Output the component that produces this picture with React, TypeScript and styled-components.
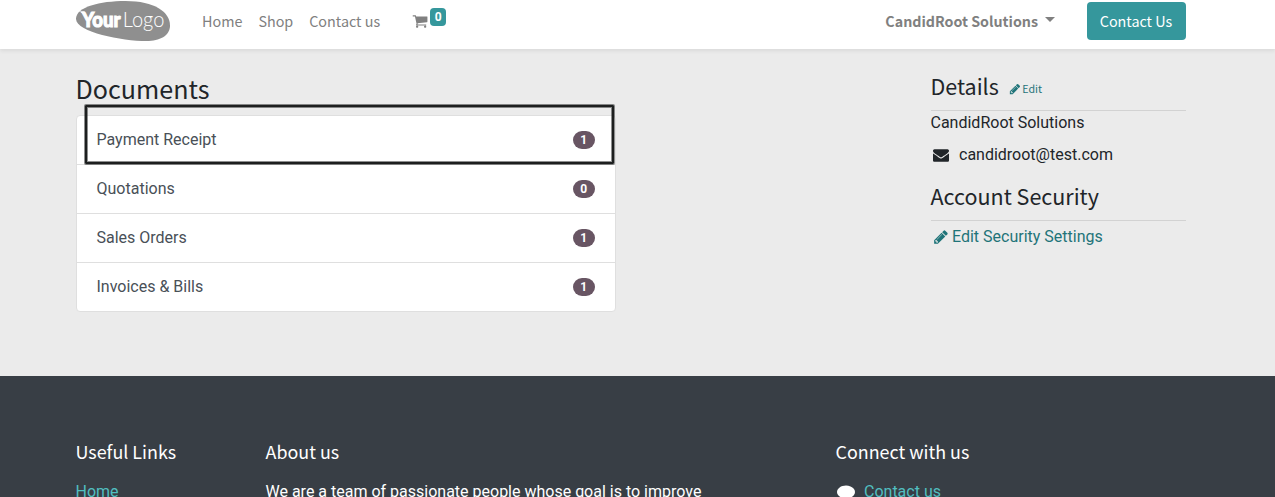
import React from "react";
import styled, { createGlobalStyle, css } from "styled-components";

const heading = css`
  font-family: "Noto Sans CJK SC", "Open Sans", sans-serif;
`;

const GlobalStyle = createGlobalStyle`
  *, *::before, *::after { box-sizing: border-box; }
  body {
    margin: 0;
    background: #ebebeb;
    color: #212529;
    font-family: Roboto, "Liberation Sans", sans-serif;
    font-size: 16px;
    line-height: 24px;
    overflow: hidden;
  }
`;

const Page = styled.div`
  display: flex;
  flex-direction: column;
  height: 497px;
  overflow: hidden;
`;

const Container = styled.div`
  display: flex;
  width: 1110px;
  margin-left: 75.5px;
`;

const Header = styled.header`
  flex: none;
  height: 49px;
  background: #fff;
  box-shadow: 0 2px 4px rgba(0, 0, 0, 0.075);
`;

const Navbar = styled(Container)`
  ${heading}
  align-items: center;
  height: 42px;
  color: #808080;
`;

const Logo = styled.svg`
  display: block;
  width: 95px;
  height: 42px;
  margin-right: 31.5px;
`;

const NavLink = styled.a`
  margin-right: 16px;
  font-size: 14.35px;
  line-height: 24px;
`;

const CartLink = styled.a`
  display: flex;
  align-items: center;
  margin-left: 16px;
  gap: 2px;
`;

const CartCount = styled.span`
  width: 16px;
  height: 18px;
  margin-top: -8px;
  border-radius: 4px;
  background: #35979c;
  color: #fff;
  font-family: Roboto, sans-serif;
  font-size: 12px;
  font-weight: 700;
  line-height: 18px;
  text-align: center;
`;

const UserMenu = styled.a`
  display: flex;
  align-items: center;
  gap: 7px;
  margin-left: auto;
  margin-right: 31.5px;
  font-size: 14.25px;
  font-weight: 700;
`;

const Caret = styled.span`
  margin-top: -3px;
  border: 5px solid transparent;
  border-top-color: #808080;
  border-bottom: 0;
`;

const ContactButton = styled.a`
  width: 99px;
  height: 38px;
  border-radius: 4px;
  background: #35979c;
  color: #fff;
  font-size: 14.35px;
  line-height: 38px;
  text-align: center;
`;

const Main = styled(Container)`
  flex: none;
  justify-content: space-between;
  height: 327px;
`;

const Documents = styled.section`
  width: 540px;
  padding-top: 22px;
`;

const Title = styled.h3`
  ${heading}
  margin: 0 0 10px;
  font-size: 25.1px;
  font-weight: 400;
  line-height: 34px;
`;

const List = styled.div`
  position: relative;
  border: 1px solid #dfdfdf;
  border-radius: 4px;
  background: #fff;
`;

const ListItem = styled.a`
  display: flex;
  align-items: center;
  justify-content: space-between;
  height: 49px;
  padding: 0 20px;
  color: #495057;

  & + & {
    border-top: 1px solid #dfdfdf;
  }
  &:first-child {
    height: 48px;
  }
`;

const Pill = styled.span`
  width: 22px;
  height: 18px;
  padding-left: 0.5px;
  border-radius: 10px;
  background: #685563;
  color: #fff;
  font-size: 12px;
  font-weight: 700;
  line-height: 18px;
  text-align: center;
`;

const Highlight = styled.div`
  position: absolute;
  top: -11px;
  left: 8.5px;
  width: 529px;
  height: 59px;
  border: 2px solid #1d1f1f;
  border-radius: 1px;
  box-shadow: 0 0 0 1px rgba(29, 31, 31, 0.5), inset 0 0 0 1px rgba(29, 31, 31, 0.5);
`;

const Sidebar = styled.aside`
  width: 255px;
  padding-top: 23px;
`;

const SideTitle = styled.h4`
  ${heading}
  display: flex;
  align-items: center;
  height: 39px;
  margin: 0;
  padding-bottom: 10px;
  border-bottom: 1px solid #d2d2d2;
  font-size: 21.5px;
  font-weight: 400;
  line-height: 30px;
`;

const EditLink = styled.a`
  display: flex;
  align-items: center;
  gap: 1.5px;
  margin: 6px 0 0 10px;
  color: #1f7479;
  font-size: 10.7px;
  line-height: 16px;
`;

const Person = styled.div`
  height: 24px;
`;

const Email = styled.div`
  display: flex;
  align-items: center;
  gap: 10.5px;
  height: 24px;
  margin: 8px 0 15px;
  padding-left: 2px;
`;

const SecurityLink = styled.a`
  display: flex;
  align-items: center;
  gap: 3px;
  margin-top: 4px;
  padding-left: 2.5px;
  color: #1f7479;
`;

const Footer = styled.footer`
  flex: 1;
  background: #383e45;
  color: #fff;
`;

const FooterColumn = styled.section<{ $width: number }>`
  width: ${(p) => p.$width}px;
  padding-top: 63px;
  white-space: nowrap;
`;

const FooterTitle = styled.h5`
  ${heading}
  margin: 0 0 17px;
  font-size: 17.9px;
  font-weight: 400;
  line-height: 24px;
`;

const FooterLink = styled.a`
  color: #51bfc0;
`;

const FooterRow = styled.div`
  display: flex;
  align-items: center;
  gap: 9.5px;
  padding-left: 1px;
`;

const Glyph = styled.svg<{ $size: number }>`
  flex: none;
  width: ${(p) => p.$size}px;
  height: ${(p) => p.$size}px;
  fill: currentColor;
`;

const paths = {
  cart: "M704 1536q0 52-38 90t-90 38-90-38-38-90 38-90 90-38 90 38 38 90zm896 0q0 52-38 90t-90 38-90-38-38-90 38-90 90-38 90 38 38 90zm128-1088v512q0 24-16.5 42.5t-40.5 21.5l-1044 122q13 60 13 70 0 16-24 64h920q26 0 45 19t19 45-19 45-45 19h-1024q-26 0-45-19t-19-45q0-11 8-31.5t16-36 21.5-40 15.5-29.5l-177-823h-204q-26 0-45-19t-19-45 19-45 45-19h256q16 0 28.5 6.5t19.5 15.5 13 24.5 8 26 5.5 29.5 4.5 26h1201q26 0 45 19t19 45z",
  pencil:
    "M491 1536l91-91-235-235-91 91v107h128v128h107zm523-928q0-22-22-22-10 0-17 7l-542 542q-7 7-7 17 0 22 22 22 10 0 17-7l542-542q7-7 7-17zm-54-192l416 416-832 832h-416v-416zm683 96q0 53-37 90l-166 166-416-416 166-165q36-38 90-38 53 0 91 38l235 234q37 39 37 91z",
  envelope:
    "M1792 710v794q0 66-47 113t-113 47h-1472q-66 0-113-47t-47-113v-794q44 49 101 87 362 246 497 345 57 42 92.5 65.5t94.5 48 110 24.5h2q51 0 110-24.5t94.5-48 92.5-65.5q170-123 498-345 57-39 100-87zm0-294q0 79-49 151t-122 123q-376 261-468 325-10 7-42.5 31t-54 38.5-52 32.5-57.5 27-50 9h-2q-23 0-50-9t-57.5-27-52-32.5-54-38.5-42.5-31q-91-64-262-182.5t-205-142.5q-62-42-117-115.5t-55-136.5q0-78 41.5-130t118.5-52h1472q65 0 112.5 47t47.5 113z",
  comment:
    "M1792 896q0 174-120 321.5t-326 233-450 85.5q-70 0-145-8-198 175-460 242-49 14-114 22-17 2-30.5-9t-17.5-29v-1q-3-4-.5-12t2-10 4.5-9.5l6-9 7-8.5 8-9q7-8 31-34.5t34.5-38 31-39.5 32.5-51 27-59 26-76q-157-89-247.5-220t-90.5-281q0-130 71-248.5t191-204.5 286-136.5 348-50.5q244 0 450 85.5t326 233 120 321.5z",
};

const Icon = ({ name, size }: { name: keyof typeof paths; size: number }) => (
  <Glyph $size={size} viewBox="0 0 1792 1792" aria-hidden="true">
    <path d={paths[name]} />
  </Glyph>
);

const documents = [
  { label: "Payment Receipt", count: 1 },
  { label: "Quotations", count: 0 },
  { label: "Sales Orders", count: 1 },
  { label: "Invoices & Bills", count: 1 },
];

export default function App() {
  return (
    <Page>
      <GlobalStyle />
      <Header>
        <Navbar as="nav">
          <Logo viewBox="0.5 0 95 42">
            <path
              d="M0.5 18.5C1 7 24 1 50 1C79 1 94.5 12 94.5 25.5C94.5 36 84 41 71 41C46 41 0 32 0.5 18.5Z"
              fill="#8f8f8f"
            />
            <path d="M4 11.5L9 11.5L10 14.5L7 13.5Z" fill="#fff" />
            <g fill="#fff" fontFamily="Lato, sans-serif" fontSize="21.5">
              <text x="6.5" y="27" fontWeight="900" textLength="38.5" lengthAdjust="spacingAndGlyphs" stroke="#fff" strokeWidth="1.1">
                Your
              </text>
              <text x="47.3" y="27" fontWeight="300" textLength="41.5" lengthAdjust="spacingAndGlyphs">
                Logo
              </text>
            </g>
          </Logo>
          <NavLink>Home</NavLink>
          <NavLink>Shop</NavLink>
          <NavLink>Contact us</NavLink>
          <CartLink>
            <Icon name="cart" size={16} />
            <CartCount>0</CartCount>
          </CartLink>
          <UserMenu>
            CandidRoot Solutions
            <Caret />
          </UserMenu>
          <ContactButton>Contact Us</ContactButton>
        </Navbar>
      </Header>

      <Main as="main">
        <Documents>
          <Title>Documents</Title>
          <List>
            {documents.map((d) => (
              <ListItem key={d.label}>
                {d.label}
                <Pill>{d.count}</Pill>
              </ListItem>
            ))}
            <Highlight />
          </List>
        </Documents>
        <Sidebar>
          <SideTitle>
            Details
            <EditLink>
              <Icon name="pencil" size={12} />
              Edit
            </EditLink>
          </SideTitle>
          <Person>CandidRoot Solutions</Person>
          <Email>
            <Icon name="envelope" size={16} />
            candidroot@test.com
          </Email>
          <SideTitle>Account Security</SideTitle>
          <SecurityLink>
            <Icon name="pencil" size={16} />
            Edit Security Settings
          </SecurityLink>
        </Sidebar>
      </Main>

      <Footer>
        <Container>
          <FooterColumn $width={190}>
            <FooterTitle>Useful Links</FooterTitle>
            <FooterLink>Home</FooterLink>
          </FooterColumn>
          <FooterColumn $width={570}>
            <FooterTitle>About us</FooterTitle>
            We are a team of passionate people whose goal is to improve
          </FooterColumn>
          <FooterColumn $width={350}>
            <FooterTitle>Connect with us</FooterTitle>
            <FooterRow>
              <Icon name="comment" size={18} />
              <FooterLink>Contact us</FooterLink>
            </FooterRow>
          </FooterColumn>
        </Container>
      </Footer>
    </Page>
  );
}
